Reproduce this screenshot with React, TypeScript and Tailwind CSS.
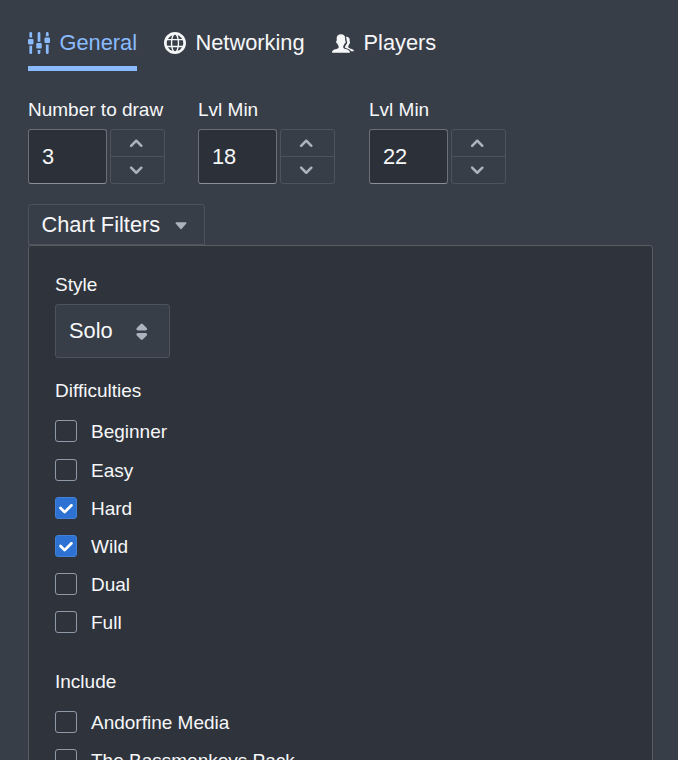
import React, { useState } from "react";

function Icon({ children, className = "size-[22px]" }: { children: React.ReactNode; className?: string }) {
  return (
    <svg viewBox="0 0 16 16" className={`shrink-0 ${className}`} fill="currentColor">
      {children}
    </svg>
  );
}

const SettingsIcon = () => (
  <Icon>
    <path d="M3 1a1 1 0 0 0-2 0v3h2zM1 10v5a1 1 0 0 0 2 0v-5zM9 1a1 1 0 0 0-2 0v6h2zM7 13v2a1 1 0 0 0 2 0v-2zM15 1a1 1 0 0 0-2 0v2h2zM13 9v6a1 1 0 0 0 2 0V9z" />
    <rect x="0" y="5" width="4" height="4" rx=".8" />
    <rect x="6" y="8" width="4" height="4" rx=".8" />
    <rect x="12" y="4" width="4" height="4" rx=".8" />
  </Icon>
);

const GlobeIcon = () => (
  <Icon>
    <path d="M8 0C3.58 0 0 3.58 0 8s3.58 8 8 8 8-3.58 8-8-3.58-8-8-8zm5.17 5h-2.44c-.21-1.11-.51-2.03-.91-2.69 1.43.46 2.61 1.43 3.35 2.69zM10 8c0 .73-.05 1.39-.12 2H6.12C6.05 9.39 6 8.73 6 8s.05-1.39.12-2h3.76c.07.61.12 1.27.12 2zM8 2c.67 0 1.36 1.1 1.73 3H6.27C6.64 3.1 7.33 2 8 2zm-1.82.31c-.4.66-.71 1.58-.91 2.69H2.83a6.025 6.025 0 013.35-2.69zM2 8c0-.7.13-1.37.35-2h2.76c-.07.64-.11 1.31-.11 2s.04 1.36.11 2H2.35C2.13 9.37 2 8.7 2 8zm.83 3h2.44c.2 1.11.51 2.03.91 2.69A6.025 6.025 0 012.83 11zM8 14c-.67 0-1.36-1.1-1.73-3h3.46c-.37 1.9-1.06 3-1.73 3zm1.82-.31c.4-.66.7-1.58.91-2.69h2.44a6.025 6.025 0 01-3.35 2.69zM10.89 10c.07-.64.11-1.31.11-2s-.04-1.36-.11-2h2.76c.22.63.35 1.3.35 2s-.13 1.37-.35 2h-2.76z" />
  </Icon>
);

const PeopleIcon = () => (
  <Icon>
    <path d="M6.5 1.7C4.4 1.7 3.3 3.1 3.4 4.8l.1 1.3c-.5.1-.5.7-.4 1.3.1.6.4 1 .8 1 .2.8.5 1.4.9 1.8v1.2c-.3.5-1.4.8-2.4 1.2C.9 13.2 0 13.5 0 15.1h13c0-1.6-.9-1.9-2.4-2.5-1-.4-2.1-.7-2.4-1.2v-1.2c.4-.4.7-1 .9-1.8.4 0 .7-.4.8-1 .1-.6.1-1.2-.4-1.3l.1-1.3c.1-1.7-1-3.1-3.1-3.1z" />
    <path d="M10 3.5c1.7-.3 3 .7 2.9 2.4l-.1 1c.4.2.4.6.3 1-.1.5-.3.8-.6.9-.2.7-.4 1.1-.7 1.5v.7c.3.5 1.1.8 2 1.1 1.5.6 2.2.9 2.2 1.9h-2.2c-.5-1.1-1.6-1.5-2.9-2-.8-.3-1.2-.5-1.5-.8v-.4c.3-.4.5-.9.7-1.5.5-.3.8-.8.9-1.5.1-.6 0-1.2-.4-1.6 0-1 0-1.9-.6-2.7z" />
  </Icon>
);

const ChevronUp = () => (
  <Icon className="mr-[2px] size-[20.5px] text-[#abb3bf]">
    <path d="M12.71 9.29l-4-4C8.53 5.11 8.28 5 8 5s-.53.11-.71.29l-4 4a1.003 1.003 0 001.42 1.42L8 7.41l3.29 3.29c.18.19.43.3.71.3a1.003 1.003 0 00.71-1.71z" />
  </Icon>
);

const ChevronDown = () => (
  <Icon className="mr-[2px] size-[20.5px] text-[#abb3bf]">
    <path d="M12 5c-.28 0-.53.11-.71.29L8 8.59l-3.29-3.3a1.003 1.003 0 00-1.42 1.42l4 4c.18.18.43.29.71.29s.53-.11.71-.29l4-4A1.003 1.003 0 0012 5z" />
  </Icon>
);

function NumberField({ label, initial }: { label: string; initial: number }) {
  const [value, setValue] = useState(initial);
  return (
    <div className="w-[137px]">
      <div className="h-[30px] whitespace-nowrap text-[19px] leading-[22px]">{label}</div>
      <div className="flex gap-[3px]">
        <div className="flex h-[55px] w-[79px] items-center rounded-[3px] border border-[#6a6f78] border-b-[#8a9099] bg-[#2c3038] pl-[13px] pt-[2px] text-[21.8px]">
          {value}
        </div>
        <div className="flex h-[55px] w-[55px] flex-col rounded-[3px] border border-[#4d535d]">
          <button className="flex h-[27px] items-center justify-center border-b border-[#4d535d]" onClick={() => setValue(value + 1)}>
            <ChevronUp />
          </button>
          <button className="flex h-[26px] items-center justify-center" onClick={() => setValue(value - 1)}>
            <ChevronDown />
          </button>
        </div>
      </div>
    </div>
  );
}

function CheckRow({ label, initial = false }: { label: string; initial?: boolean }) {
  const [checked, setChecked] = useState(initial);
  return (
    <div className="flex h-[38.1px] items-start gap-[14px]" onClick={() => setChecked(!checked)}>
      <span
        className={`flex size-[22px] shrink-0 items-center justify-center rounded-[3px] border ${
          checked ? "border-[#4280d6] bg-[#2d72d2]" : "border-[#8f99a8]"
        }`}
      >
        {checked && (
          <Icon className="size-[22px] text-white">
            <path d="M12 5c-.28 0-.53.11-.71.29L7 9.59l-2.29-2.3a1.003 1.003 0 00-1.42 1.42l3 3c.18.18.43.29.71.29s.53-.11.71-.29l5-5A1.003 1.003 0 0012 5z" />
          </Icon>
        )}
      </span>
      <span className="whitespace-nowrap text-[19px] leading-[23px]">{label}</span>
    </div>
  );
}

export default function App() {
  return (
    <div className="h-[760px] w-[678px] overflow-hidden bg-[#383e47] pl-7 pr-[25px] font-['Liberation_Sans',Arial,sans-serif] text-[#f6f7f9]">
      <nav className="flex h-[71px] gap-[27px] pt-[14px] text-[21.8px]">
        <div className="flex h-[57px] w-[109px] items-center gap-[9.5px] border-b-[5px] border-[#8abbff] pt-[5px] text-[#8abbff]">
          <SettingsIcon />
          <span className="pt-[2px]">General</span>
        </div>
        <div className="flex h-[57px] w-[141px] items-center gap-[9.5px]">
          <GlobeIcon />
          <span className="pt-[2px]">Networking</span>
        </div>
        <div className="flex h-[57px] items-center gap-[9.5px]">
          <PeopleIcon />
          <span className="pt-[2px]">Players</span>
        </div>
      </nav>

      <div className="mt-[28px] flex">
        <div className="w-[170px]">
          <NumberField label="Number to draw" initial={3} />
        </div>
        <div className="w-[171px]">
          <NumberField label="Lvl Min" initial={18} />
        </div>
        <NumberField label="Lvl Min" initial={22} />
      </div>

      <button className="mt-5 flex h-[41px] w-[177px] items-center rounded-t-[3px] border border-[#4d535d] pl-[12.5px] text-[21.8px]">
        <span className="pt-[2px]">Chart Filters</span>
        <Icon className="ml-[9.5px] size-[22px] text-[#abb3bf]">
          <path d="M12 6.5c0-.28-.22-.5-.5-.5h-7a.495.495 0 00-.37.83l3.5 4c.09.1.22.17.37.17s.28-.07.37-.17l3.5-4c.08-.09.13-.2.13-.33z" />
        </Icon>
      </button>

      <section className="h-[560px] rounded-t-[3px] border border-[#585c63] bg-[#2f343c] px-[26px] pt-[28px]">
        <div className="h-[30px] text-[19px] leading-[22px]">Style</div>
        <button className="flex h-[54px] w-[115px] items-center rounded-[3px] border border-[#4d535d] bg-[#383e47] pl-[13px] pt-px text-[21.8px]">
          Solo
          <Icon className="ml-[18.5px] size-[21.5px] text-[#abb3bf]">
            <path d="M5 7h6a1.003 1.003 0 00.71-1.71l-3-3C8.53 2.11 8.28 2 8 2s-.53.11-.71.29l-3 3A1.003 1.003 0 005 7zm6 2H5a1.003 1.003 0 00-.71 1.71l3 3c.18.18.43.29.71.29s.53-.11.71-.29l3-3A1.003 1.003 0 0011 9z" />
          </Icon>
        </button>
        <div className="mt-[22px] h-[40.45px] text-[19px] leading-[22px]">Difficulties</div>
        <CheckRow label="Beginner" />
        <CheckRow label="Easy" />
        <CheckRow label="Hard" initial />
        <CheckRow label="Wild" initial />
        <CheckRow label="Dual" />
        <CheckRow label="Full" />
        <div className="mt-[22px] h-[40px] text-[19px] leading-[22px]">Include</div>
        <CheckRow label="Andorfine Media" />
        <CheckRow label="The Bassmonkeys Pack" />
      </section>
    </div>
  );
}
